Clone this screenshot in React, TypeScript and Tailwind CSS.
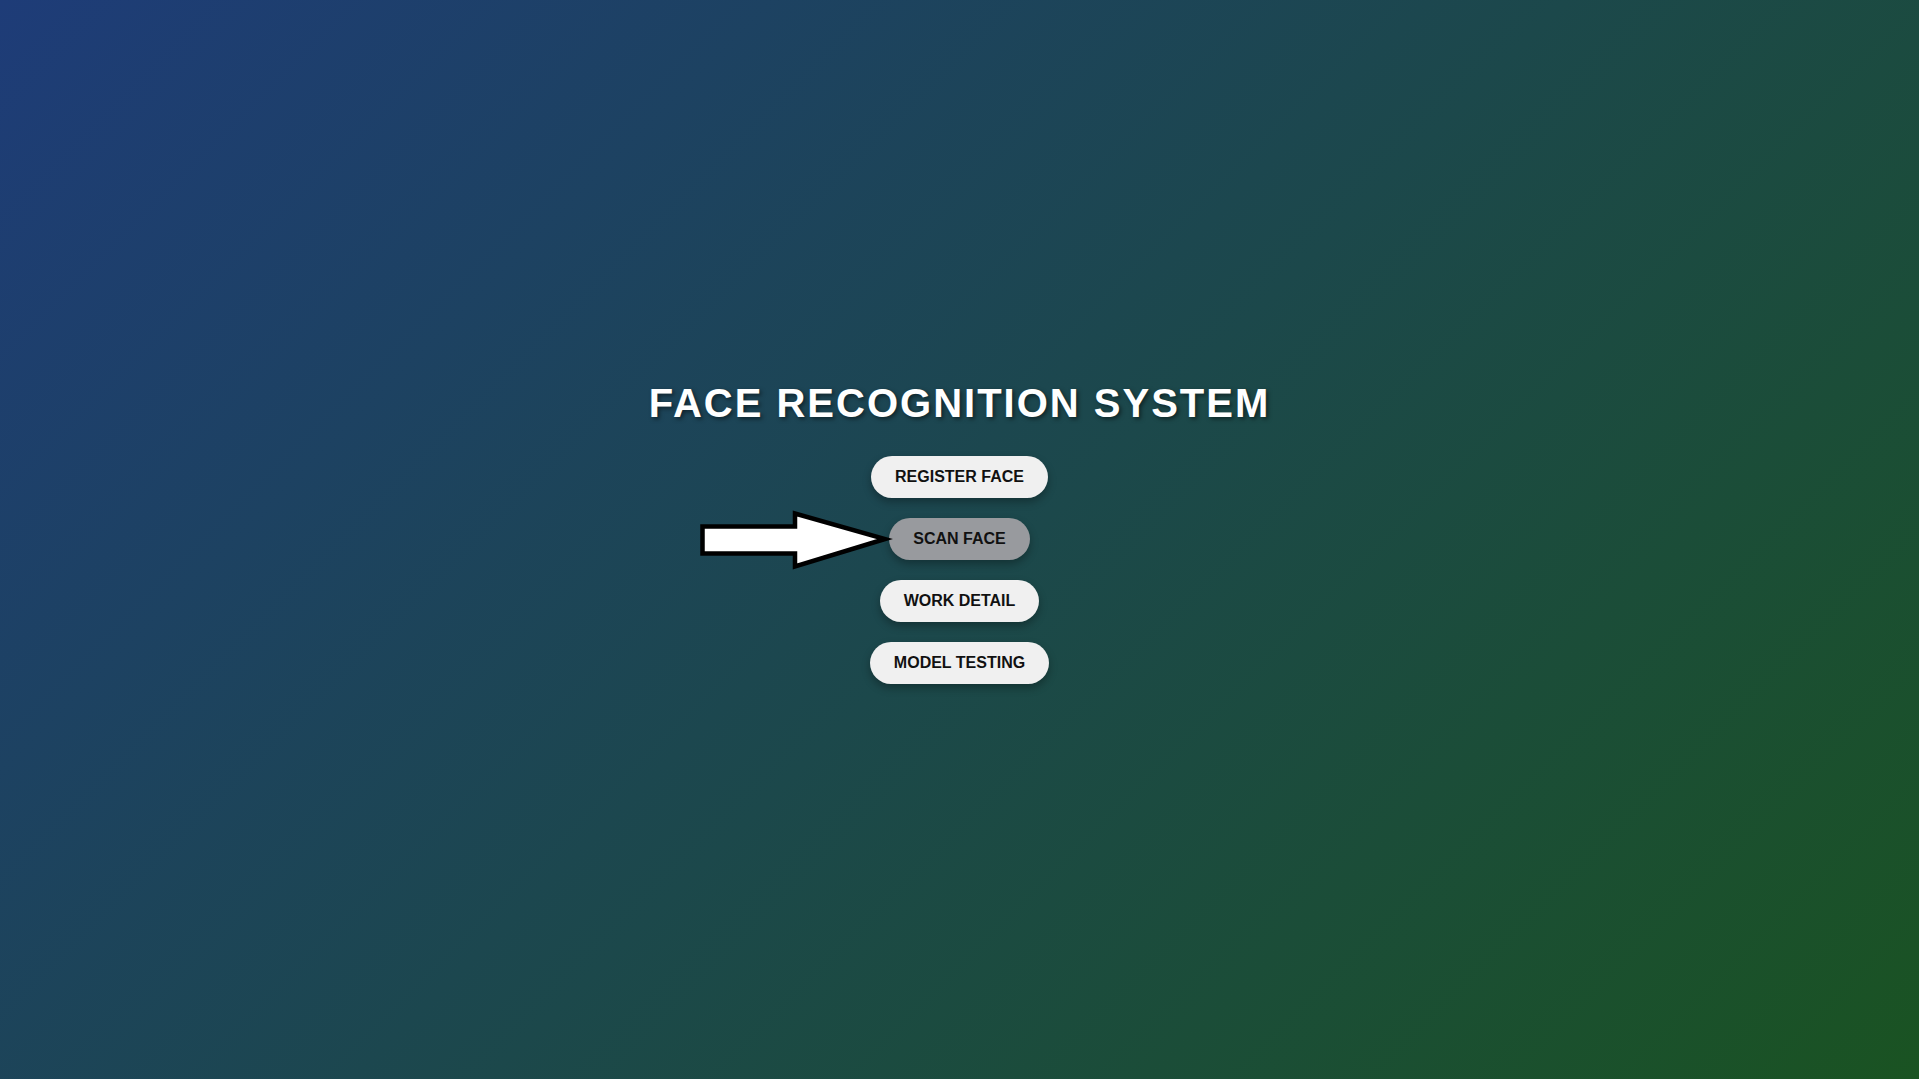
import React from 'react';

const items = ['REGISTER FACE', 'SCAN FACE', 'WORK DETAIL', 'MODEL TESTING'];

function Arrow() {
  return (
    <svg width="196" height="62" viewBox="0 0 196 62" className="absolute left-[-172px] top-[53px]">
      <polygon
        points="4.5,17.5 97,17.5 97,4.5 187,30 97,57.5 97,44.5 4.5,44.5"
        fill="#ffffff"
        stroke="#000000"
        strokeWidth="4.5"
        strokeLinejoin="miter"
      />
    </svg>
  );
}

export default function App() {
  const active = 'SCAN FACE';

  return (
    <div className="min-h-screen w-full bg-[linear-gradient(135deg,#1e3c78,#1a5322)] font-['Liberation_Sans',Arial,sans-serif]">
      <div className="flex flex-col items-center pt-[380px]">
        <h1 className="text-[40px] leading-[46px] font-bold tracking-[2px] text-white [text-shadow:2px_2px_4px_rgba(0,0,0,0.5)]">
          FACE RECOGNITION SYSTEM
        </h1>
        <div className="relative mt-[30px] flex flex-col items-center gap-5">
          {items.map(label => (
            <button
              key={label}
              className={
                'h-[42px] px-6 rounded-full text-base font-bold text-[#111] shadow-[0_4px_8px_rgba(0,0,0,0.3)] ' +
                (label === active ? 'bg-[#989a9e]' : 'bg-[#f0f0f0]')
              }
            >
              {label}
            </button>
          ))}
          <Arrow />
        </div>
      </div>
    </div>
  );
}
